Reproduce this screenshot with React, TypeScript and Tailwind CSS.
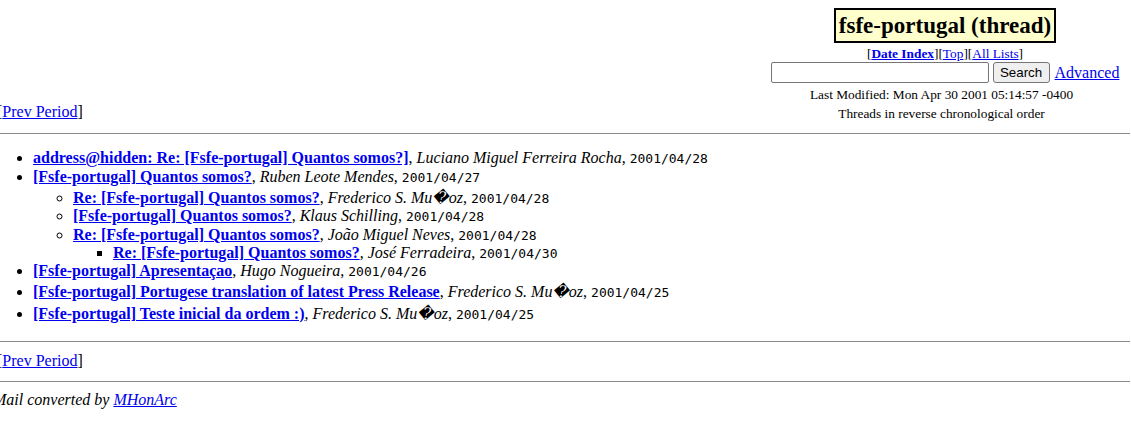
import React from "react";

type Item = {
  title: string;
  author: string;
  date: string;
  h: string;
};

const L = "text-[#0000ee] underline";

function Row({ it }: { it: Item }) {
  return (
    <div className={`leading-[18px] ${it.h}`}>
      <strong className="font-bold">
        <a className={L} href="#">
          {it.title}
        </a>
      </strong>
      , <em className="italic">{it.author}</em>,{" "}
      <span className="font-['DejaVu_Sans_Mono',monospace] text-[13px] leading-[15px]">{it.date}</span>
    </div>
  );
}

export default function App() {
  const hr = <div className="h-0 w-[1130px] border-t border-[#8a8a8a]" />;
  return (
    <div className="w-[1131px] h-[425px] overflow-hidden bg-white text-black font-['Liberation_Serif','DejaVu_Serif',serif] text-[16px] leading-[18px]">
      {/* header */}
      <div className="flex h-[133px]">
        <div className="flex items-end pb-[12px] ml-[-3px] leading-[18px] whitespace-nowrap">
          [<a className={L} href="#">Prev Period</a>]
        </div>
        <div className="ml-auto mr-[6px] w-[360px] flex flex-col items-center pt-[8px]">
          <div className="border-2 border-black bg-[#ffffcc] px-[3px] py-[2px] text-[23px] font-bold leading-[27px] whitespace-nowrap">
            fsfe-portugal (thread)
          </div>
          <div className="mt-[3px] text-[13.33px] leading-[15px] whitespace-nowrap">
            [<a className={`${L} font-bold`} href="#">Date Index</a>][<a className={L} href="#">Top</a>][<a className={L} href="#">All Lists</a>]
          </div>
          <div className="mt-[1px] flex items-center h-[21px] whitespace-nowrap">
            <input
              type="text"
              className="w-[218px] h-[21px] border border-[#767676] rounded-[2px] bg-white px-[2px] text-[13px]"
            />
            <button className="ml-[4px] w-[57px] h-[21px] border border-[#767676] rounded-[3px] bg-[#efefef] font-['Liberation_Sans',Arial,sans-serif] text-[13.33px] leading-[15px] text-black">
              Search
            </button>
            <a className={`${L} ml-[5px] leading-[18px]`} href="#">
              Advanced
            </a>
          </div>
          <div className="mt-[4px] pr-[7px] text-[13.33px] leading-[15px] whitespace-nowrap">
            Last Modified: Mon Apr 30 2001 05:14:57 -0400
          </div>
          <div className="mt-[4px] pr-[7px] text-[13.33px] leading-[15px] whitespace-nowrap">
            Threads in reverse chronological order
          </div>
        </div>
      </div>
      {hr}
      {/* thread list */}
      <ul className="list-disc pl-[40px] ml-[-7px] pt-[15px] pb-[18px] whitespace-nowrap leading-[18px]">
        <li>
          <Row it={{ title: "address@hidden: Re: [Fsfe-portugal] Quantos somos?]", author: "Luciano Miguel Ferreira Rocha", date: "2001/04/28", h: "h-[19px]" }} />
        </li>
        <li>
          <Row it={{ title: "[Fsfe-portugal] Quantos somos?", author: "Ruben Leote Mendes", date: "2001/04/27", h: "h-[21px]" }} />
          <ul className="list-[circle] pl-[40px]">
            <li>
              <Row it={{ title: "Re: [Fsfe-portugal] Quantos somos?", author: "Frederico S. Mu\uFFFDoz", date: "2001/04/28", h: "h-[18px]" }} />
            </li>
            <li>
              <Row it={{ title: "[Fsfe-portugal] Quantos somos?", author: "Klaus Schilling", date: "2001/04/28", h: "h-[19px]" }} />
            </li>
            <li>
              <Row it={{ title: "Re: [Fsfe-portugal] Quantos somos?", author: "Jo\u00e3o Miguel Neves", date: "2001/04/28", h: "h-[18px]" }} />
              <ul className="list-[square] pl-[40px]">
                <li>
                  <Row it={{ title: "Re: [Fsfe-portugal] Quantos somos?", author: "Jos\u00e9 Ferradeira", date: "2001/04/30", h: "h-[18px]" }} />
                </li>
              </ul>
            </li>
          </ul>
        </li>
        <li>
          <Row it={{ title: "[Fsfe-portugal] Apresenta\u00e7ao", author: "Hugo Nogueira", date: "2001/04/26", h: "h-[21px]" }} />
        </li>
        <li>
          <Row it={{ title: "[Fsfe-portugal] Portugese translation of latest Press Release", author: "Frederico S. Mu\uFFFDoz", date: "2001/04/25", h: "h-[22px]" }} />
        </li>
        <li>
          <Row it={{ title: "[Fsfe-portugal] Teste inicial da ordem :)", author: "Frederico S. Mu\uFFFDoz", date: "2001/04/25", h: "h-[18px]" }} />
        </li>
      </ul>
      {hr}
      <div className="pt-[10px] pb-[11px] ml-[-3px] leading-[18px] whitespace-nowrap">
        [<a className={L} href="#">Prev Period</a>]
      </div>
      {hr}
      <div className="pt-[9px] ml-[-7px] leading-[18px] italic whitespace-nowrap">
        Mail converted by{" "}
        <a className={L} href="#">
          MHonArc
        </a>
      </div>
    </div>
  );
}
